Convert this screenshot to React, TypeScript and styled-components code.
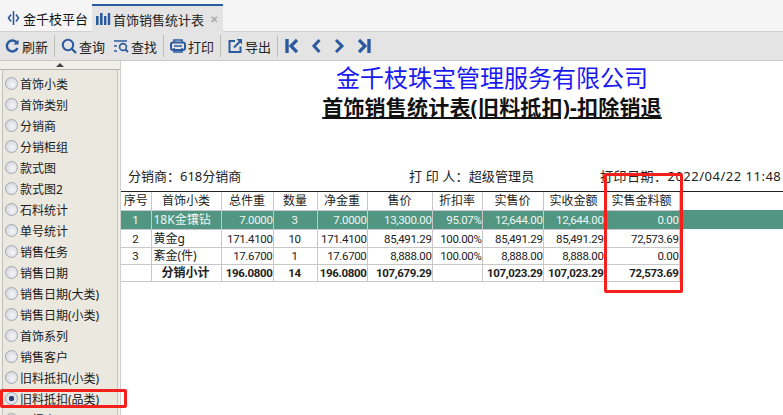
import React from "react";
import styled, { createGlobalStyle } from "styled-components";

const Global = createGlobalStyle`
  html, body { margin: 0; padding: 0; background: #fff; overflow: hidden; }
  body { font-family: "Noto Sans", "Noto Sans CJK SC", sans-serif; color: #111; }
`;
const CJK = `"Noto Sans", "Noto Sans CJK SC", sans-serif`;
const NUM = `Roboto, "Noto Sans CJK SC", sans-serif`;

const Page = styled.div`
  width: 783px; height: 415px; display: flex; flex-direction: column; overflow: hidden; position: relative;
`;
const TabBar = styled.div`
  height: 31px; flex: none; background: #f5f5f5; display: flex; align-items: flex-end;
  border-bottom: 1px solid #d0d0d0;
`;
const HomeTab = styled.div`
  height: 26px; width: 92px; display: flex; align-items: center; gap: 3px; padding-left: 7px; box-sizing: border-box;
  font: 13px ${CJK}; color: #111;
`;
const ActiveTab = styled.div`
  width: 131px; display: flex; align-items: center; gap: 2px; padding-left: 3px; box-sizing: border-box;
  background: #e4e4e4; border-top: 2px solid #2c5a9e; font: 13px ${CJK}; color: #222; margin-bottom: -1px;
  height: 28px; white-space: nowrap;
`;
const Close = styled.span`
  margin-left: 4px; color: #aaa; font: bold 10px "Liberation Sans", sans-serif;
`;
const Toolbar = styled.div`
  height: 28px; flex: none; background: #e4e4e4; border-bottom: 1px solid #c8c8c8; display: flex; align-items: center; padding-left: 5px;
`;
const ToolButton = styled.div<{ $gap?: number; $ml?: number }>`
  display: flex; align-items: center; gap: ${(p) => p.$gap ?? 2}px; margin-left: ${(p) => p.$ml ?? 0}px;
  font: 13px ${CJK}; color: #222; white-space: nowrap;
`;
const Divider = styled.div<{ $r?: number }>`
  width: 1px; height: 22px; background: #bdbdb5; margin: 0 ${(p) => p.$r ?? 6}px 0 6px;
`;
const NavGroup = styled.div`
  display: flex; align-items: center; gap: 13px;
`;
const Body = styled.div`
  flex: 1; display: flex; min-height: 0; position: relative;
`;
const Side = styled.div`
  width: 121px; flex: none; background: #f1efe9; border-right: 1px solid #cfcfcf; box-sizing: border-box; display: flex; flex-direction: column; overflow: hidden;
`;
const ScrollArrow = styled.div`
  height: 8px; flex: none; display: flex; justify-content: center; align-items: center; border-bottom: 1px solid #b5b3a8;
  &::before { content: ""; border-left: 4px solid transparent; border-right: 4px solid transparent; border-bottom: 4px solid #444; }
`;
const RadioList = styled.div`
  margin-left: 2px; width: 116px; flex: 1; background: #ebe8e0; border-left: 1px solid #c4c2b8; border-right: 1px solid #c4c2b8;
  box-sizing: border-box; padding-top: 3px; overflow: hidden;
`;
const RadioRow = styled.div`
  height: 21px; display: flex; align-items: center; gap: 2px; padding-left: 2px; font: 12px ${CJK}; color: #1a1a1a; white-space: nowrap;
`;
const Radio = styled.span<{ $on?: boolean }>`
  width: 13px; height: 13px; border-radius: 50%; box-sizing: border-box; border: 1px solid #a2a6ae; flex: none;
  background: ${(p) => (p.$on ? "radial-gradient(circle, #2b3f70 0 2.5px, #dfe3ec 3px)" : "radial-gradient(circle at 60% 60%, #f4f5f8, #cfd2da)")};
`;
const Report = styled.div`
  flex: 1; min-width: 0; background: #fff;
`;
const Company = styled.div`
  font: 24px/33px ${CJK}; color: #1a1af0; text-align: center; height: 33px; white-space: nowrap; width: 742px;
`;
const Title = styled.div`
  font: bold 21px/27px ${CJK}; color: #111; text-align: center; text-decoration: underline; letter-spacing: 0.2px; width: 742px; white-space: nowrap;
`;
const InfoRow = styled.div`
  margin-top: 45px; height: 21px; display: flex; font: 13px/21px ${CJK}; color: #222; white-space: nowrap; padding-left: 7px;
`;
const InfoA = styled.span` width: 281px; `;
const InfoB = styled.span` width: 191px; letter-spacing: 0.15px; `;
const InfoC = styled.span` letter-spacing: 0.5px; `;
const TableWrap = styled.div`
  margin-top: 4px; border-top: 1px solid #222; position: relative;
`;
const Table = styled.table`
  border-collapse: collapse; table-layout: fixed; width: 558px; font: 12px/14px ${CJK}; color: #222;
`;
const Head = styled.th`
  height: 18px; padding: 0; font-weight: normal; text-align: center; border: 1px solid #c8c8c8; border-top: none; white-space: nowrap; overflow: hidden;
  &:first-child { border-left: none; }
`;
const Row = styled.tr<{ $sel?: boolean }>`
  background: ${(p) => (p.$sel ? "#529682" : "transparent")};
  color: ${(p) => (p.$sel ? "#eef6f2" : "#222")};
`;
const Cell = styled.td<{ $a?: string; $b?: boolean; $n?: boolean; $h: number }>`
  height: ${(p) => p.$h}px; padding: 0 ${(p) => (p.$a === "right" ? 0 : 1)}px 0 ${(p) => (p.$a === "left" ? 2 : 0)}px;
  border: 1px solid #c8c8c8; white-space: nowrap; overflow: visible;
  text-align: ${(p) => p.$a ?? "right"}; font-weight: ${(p) => (p.$b ? 700 : 400)};
  font-family: ${(p) => (p.$n ? NUM : CJK)};
  font-size: ${(p) => (p.$n ? "11.5px" : "12px")};
  letter-spacing: ${(p) => (p.$n ? "-0.35px" : "0")};
  &:first-child { border-left: none; }
`;
const SelExtension = styled.div`
  position: absolute; left: 558px; top: 18px; width: 104px; height: 19px; background: #529682;
`;
const RedBox = styled.div`
  position: absolute; border: 3px solid #f5201c; box-sizing: border-box; border-radius: 2px;
`;
const ReportBox = styled(RedBox)` left: 604px; top: 112px; width: 79px; height: 120px; `;
const SideBox = styled(RedBox)` left: 0; top: 328px; width: 127px; height: 19px; `;

const blue = "#2c5a9e";
const Ic = ({ children, w = 16 }: { children: React.ReactNode; w?: number }) => (
  <svg width={w} height={16} viewBox={`0 0 ${w} 16`} fill="none" stroke={blue} strokeWidth="2" style={{ flex: "none" }}>
    {children}
  </svg>
);

const items = ["首饰小类","首饰类别","分销商","分销柜组","款式图","款式图2","石料统计","单号统计","销售任务","销售日期","销售日期(大类)","销售日期(小类)","首饰系列","销售客户","旧料抵扣(小类)","旧料抵扣(品类)"];
const headers = ["序号","首饰小类","总件重","数量","净金重","售价","折扣率","实售价","实收金额","实售金料额"];
const widths = [30,70,52,44,50,65,50,61,61,75];
const rows = [
  ["1","18K金镶钻","7.0000","3","7.0000","13,300.00","95.07%","12,644.00","12,644.00","0.00"],
  ["2","黄金g","171.4100","10","171.4100","85,491.29","100.00%","85,491.29","85,491.29","72,573.69"],
  ["3","紊金(件)","17.6700","1","17.6700","8,888.00","100.00%","8,888.00","8,888.00","0.00"],
];
const rowHeights = [18, 17, 16];
const total = ["","分销小计","196.0800","14","196.0800","107,679.29","","107,023.29","107,023.29","72,573.69"];
const align = (i: number) => (i === 0 || i === 3 ? "center" : i === 1 ? "left" : "right");

export default function App() {
  return (
    <Page>
      <Global />
      <TabBar>
        <HomeTab>
          <svg width="13" height="16" viewBox="0 0 13 16" fill="none" stroke={blue} strokeWidth="1.6">
            <path d="M6.5 1v14M4 4.5 1.5 8 4 11.5M9 4.5 11.5 8 9 11.5" />
          </svg>
          金千枝平台
        </HomeTab>
        <ActiveTab>
          <svg width="16" height="14" viewBox="0 0 16 14" fill={blue} style={{ flex: "none" }}>
            <rect x="1" y="4" width="2.6" height="9" /><rect x="5" y="1" width="2.6" height="12" /><rect x="9" y="4" width="2.4" height="9" /><rect x="12.8" y="1" width="2.4" height="12" />
          </svg>
          首饰销售统计表
          <Close>✕</Close>
        </ActiveTab>
      </TabBar>
      <Toolbar>
        <ToolButton $gap={3}>
          <Ic w={14}><path d="M12 5A5.5 5.5 0 1 0 12.5 10" strokeWidth="2.4" /><path d="M13.5 1.5v5h-5z" fill={blue} stroke="none" /></Ic>
          刷新
        </ToolButton>
        <Divider />
        <ToolButton>
          <Ic><circle cx="7" cy="7" r="5.2" strokeWidth="2" /><path d="M10.5 10.5 15 15" strokeWidth="2.4" /></Ic>
          查询
        </ToolButton>
        <ToolButton $ml={8}>
          <Ic><path d="M1 3h13M1 8h3M1 13h3" strokeWidth="1.6" /><circle cx="10" cy="9" r="3.4" strokeWidth="1.6" /><path d="M12.5 11.5 15 14" /></Ic>
          查找
        </ToolButton>
        <Divider />
        <ToolButton>
          <Ic><rect x="1" y="4.5" width="14" height="7.5" rx="2" /><path d="M4 4V2h8v2M4 10v4h8v-4" strokeWidth="1.5" /><path d="M4 8h8" strokeWidth="1.5" /></Ic>
          打印
        </ToolButton>
        <Divider $r={7} />
        <ToolButton $gap={3}>
          <Ic w={14}><path d="M7 3H1.5v11h11V8.5" /><path d="M6 9.5 12 3.5" /><path d="M8.5 1H14v5.5z" fill={blue} stroke="none" /></Ic>
          导出
        </ToolButton>
        <Divider $r={7} />
        <NavGroup>
          <Ic w={13}><path d="M2 1v14" strokeWidth="3.4" /><path d="M12 2 6 8l6 6" strokeWidth="3.2" /></Ic>
          <Ic w={10}><path d="M8.5 2 3 8l5.5 6" strokeWidth="3" /></Ic>
          <Ic w={11}><path d="M2 2l6 6-6 6" strokeWidth="3" /></Ic>
          <Ic w={13}><path d="M11 1v14" strokeWidth="3.4" /><path d="M1 2l6 6-6 6" strokeWidth="3.2" /></Ic>
        </NavGroup>
      </Toolbar>
      <Body>
        <Side>
          <ScrollArrow />
          <RadioList>
            {items.map((t, i) => (
              <RadioRow key={t}><Radio $on={i === 15} />{t}</RadioRow>
            ))}
            <RadioRow><Radio />日报表</RadioRow>
          </RadioList>
        </Side>
        <Report>
          <Company>金千枝珠宝管理服务有限公司</Company>
          <Title>首饰销售统计表(旧料抵扣)-扣除销退</Title>
          <InfoRow>
            <InfoA>分销商：618分销商</InfoA>
            <InfoB>打 印 人：超级管理员</InfoB>
            <InfoC>打印日期：2022/04/22 11:48</InfoC>
          </InfoRow>
          <TableWrap>
            <SelExtension />
            <Table>
              <colgroup>{widths.map((w, i) => <col key={i} style={{ width: w }} />)}</colgroup>
              <thead>
                <tr>{headers.map((h) => <Head key={h}>{h}</Head>)}</tr>
              </thead>
              <tbody>
                {rows.map((r, ri) => (
                  <Row key={ri} $sel={ri === 0}>
                    {r.map((c, i) => <Cell key={i} $a={align(i)} $n={i !== 1} $h={rowHeights[ri]}>{c}</Cell>)}
                  </Row>
                ))}
                <Row>
                  {total.map((c, i) => <Cell key={i} $a={i === 1 ? "center" : align(i)} $b $n={i !== 1} $h={16}>{c}</Cell>)}
                </Row>
              </tbody>
            </Table>
          </TableWrap>
        </Report>
        <ReportBox />
        <SideBox />
      </Body>
    </Page>
  );
}
